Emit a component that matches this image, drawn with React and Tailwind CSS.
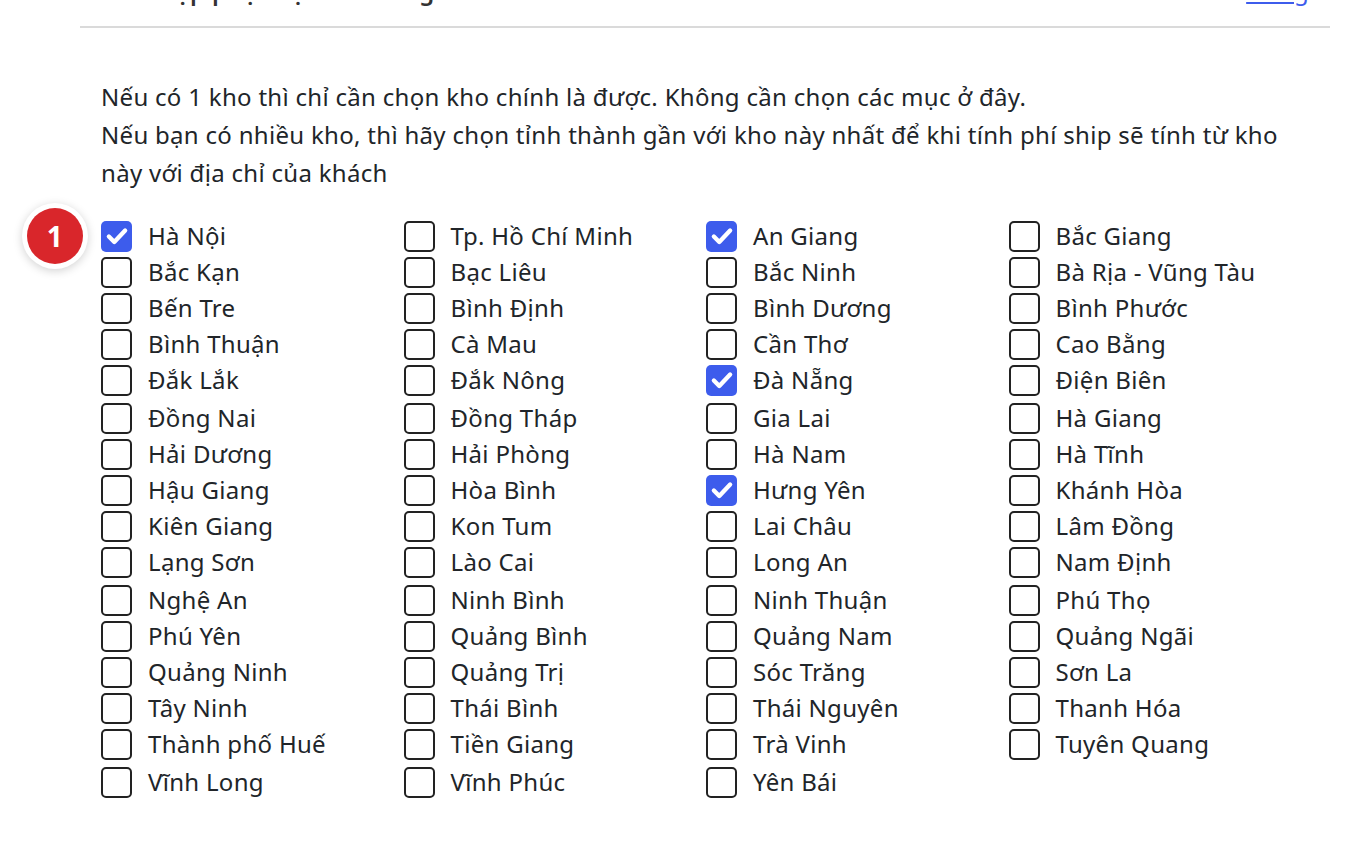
import React from "react";

const provinces = [
  ["Hà Nội", true], ["Tp. Hồ Chí Minh", false], ["An Giang", true], ["Bắc Giang", false],
  ["Bắc Kạn", false], ["Bạc Liêu", false], ["Bắc Ninh", false], ["Bà Rịa - Vũng Tàu", false],
  ["Bến Tre", false], ["Bình Định", false], ["Bình Dương", false], ["Bình Phước", false],
  ["Bình Thuận", false], ["Cà Mau", false], ["Cần Thơ", false], ["Cao Bằng", false],
  ["Đắk Lắk", false], ["Đắk Nông", false], ["Đà Nẵng", true], ["Điện Biên", false],
  ["Đồng Nai", false], ["Đồng Tháp", false], ["Gia Lai", false], ["Hà Giang", false],
  ["Hải Dương", false], ["Hải Phòng", false], ["Hà Nam", false], ["Hà Tĩnh", false],
  ["Hậu Giang", false], ["Hòa Bình", false], ["Hưng Yên", true], ["Khánh Hòa", false],
  ["Kiên Giang", false], ["Kon Tum", false], ["Lai Châu", false], ["Lâm Đồng", false],
  ["Lạng Sơn", false], ["Lào Cai", false], ["Long An", false], ["Nam Định", false],
  ["Nghệ An", false], ["Ninh Bình", false], ["Ninh Thuận", false], ["Phú Thọ", false],
  ["Phú Yên", false], ["Quảng Bình", false], ["Quảng Nam", false], ["Quảng Ngãi", false],
  ["Quảng Ninh", false], ["Quảng Trị", false], ["Sóc Trăng", false], ["Sơn La", false],
  ["Tây Ninh", false], ["Thái Bình", false], ["Thái Nguyên", false], ["Thanh Hóa", false],
  ["Thành phố Huế", false], ["Tiền Giang", false], ["Trà Vinh", false], ["Tuyên Quang", false],
  ["Vĩnh Long", false], ["Vĩnh Phúc", false], ["Yên Bái", false],
];

const Checkbox = ({ checked }) =>
  checked ? (
    <span className="flex items-center justify-center w-[31px] h-[31px] shrink-0 rounded-[5px] bg-[#3d5cec]">
      <svg viewBox="0 0 24 24" className="w-[26px] h-[26px]" fill="none">
        <path d="M4.5 12.5l5 5 10-10.5" stroke="#fff" strokeWidth="4" strokeLinecap="round" strokeLinejoin="round" />
      </svg>
    </span>
  ) : (
    <span className="block w-[31px] h-[31px] shrink-0 rounded-[5px] border-[2.5px] border-[#222] bg-white" />
  );

export default function App() {
  return (
    <div className="relative min-h-[846px] bg-white text-[#212529] overflow-hidden tracking-[0.3px]" style={{ fontFamily: '"Noto Sans", "Open Sans", sans-serif' }}>
      <div className="ml-[80px] mr-[28px]">
        {/* header, mostly scrolled off the top */}
        <div className="flex justify-between items-start -mt-[27px] pb-[17px] px-[21px] border-b-2 border-[#dadada]">
          <h2 className="text-[24px] leading-[36px] font-semibold text-[#333]">Thiết lập phục vụ theo vùng</h2>
          <a href="#" className="text-[24px] leading-[36px] text-[#3d5cec] underline">Đóng</a>
        </div>

        <div className="px-[21px] pt-[50px]">
          <p className="text-[24px] leading-[38px] whitespace-nowrap">
            Nếu có 1 kho thì chỉ cần chọn kho chính là được. Không cần chọn các mục ở đây.
            <br />
            Nếu bạn có nhiều kho, thì hãy chọn tỉnh thành gần với kho này nhất để khi tính phí ship sẽ tính từ kho
            <br />
            này với địa chỉ của khách
          </p>

          <div className="grid grid-cols-[repeat(4,302.5px)] grid-rows-[repeat(5,36px)_38px_repeat(4,36px)_38px_repeat(4,36px)_38px] mt-[26px]">
            {provinces.map(([name, checked]) => (
              <label key={name} className="flex items-end h-full">
                <span className="flex items-center h-[36px] gap-[16px]">
                  <Checkbox checked={checked} />
                  <span className="text-[24px] leading-[36px] whitespace-nowrap">{name}</span>
                </span>
              </label>
            ))}
          </div>
        </div>
      </div>

      {/* annotation badge */}
      <div className="absolute left-[22px] top-[203px] w-[66px] h-[66px] rounded-full bg-white shadow-[0_2px_10px_rgba(0,0,0,0.18)] flex items-center justify-center">
        <div className="w-[56px] h-[56px] rounded-full bg-[#d9262b] flex items-center justify-center text-white text-[28px] font-bold leading-none">
          1
        </div>
      </div>
    </div>
  );
}
